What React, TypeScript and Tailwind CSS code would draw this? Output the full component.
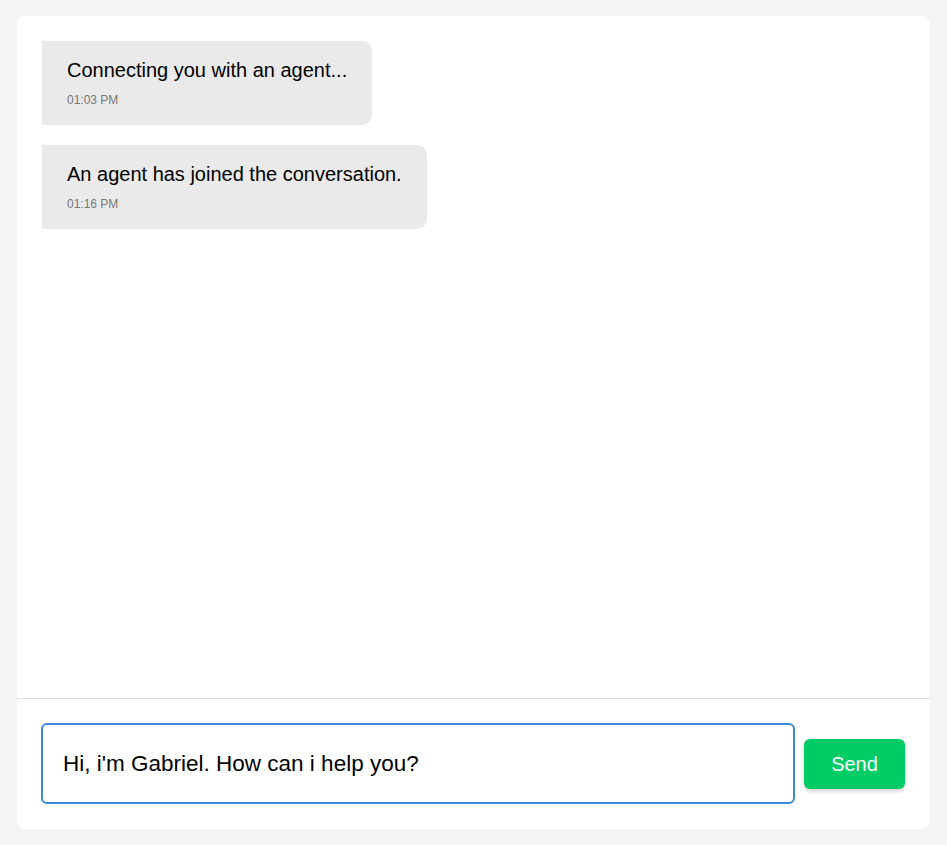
import { useState } from "react";

const messages = [
  { id: 1, text: "Connecting you with an agent...", time: "01:03 PM" },
  { id: 2, text: "An agent has joined the conversation.", time: "01:16 PM" },
];

function Bubble({ text, time }: { text: string; time: string }) {
  return (
    <div className="self-start bg-[#eaeaea] rounded-r-[10px] px-[25px] pt-[15px] pb-[16px]">
      <p className="text-[20px] leading-[28px] text-black">{text}</p>
      <p className="mt-[7px] text-[12px] leading-[18px] text-[#777]">{time}</p>
    </div>
  );
}

export default function App() {
  const [draft, setDraft] = useState("Hi, i'm Gabriel. How can i help you?");

  return (
    <div
      className="min-h-screen bg-[#f4f4f4] py-4 px-[17px]"
      style={{ fontFamily: '"Liberation Sans", Arial, sans-serif' }}
    >
      <div className="h-[813px] bg-white rounded-[8px] flex flex-col overflow-hidden">
        <div className="flex-1 flex flex-col gap-5 pt-[25px] px-[25px]">
          {messages.map((m) => (
            <Bubble key={m.id} text={m.text} time={m.time} />
          ))}
        </div>

        <form
          onSubmit={(e) => e.preventDefault()}
          className="border-t border-[#dddddd] flex items-center gap-[9px] pl-6 pt-6 pb-[25px] pr-[25px]"
        >
          <input
            value={draft}
            onChange={(e) => setDraft(e.target.value)}
            className="flex-1 min-w-0 h-[81px] px-5 text-[22.5px] text-black border-2 border-[#3b8ad9] rounded-[6px] outline-none"
          />
          <button
            type="submit"
            className="w-[101px] h-[50px] bg-[#00cc66] text-white text-[20px] rounded-[6px] shadow-[0_2px_4px_rgba(0,0,0,0.2)] shrink-0"
          >
            Send
          </button>
        </form>
      </div>
    </div>
  );
}
